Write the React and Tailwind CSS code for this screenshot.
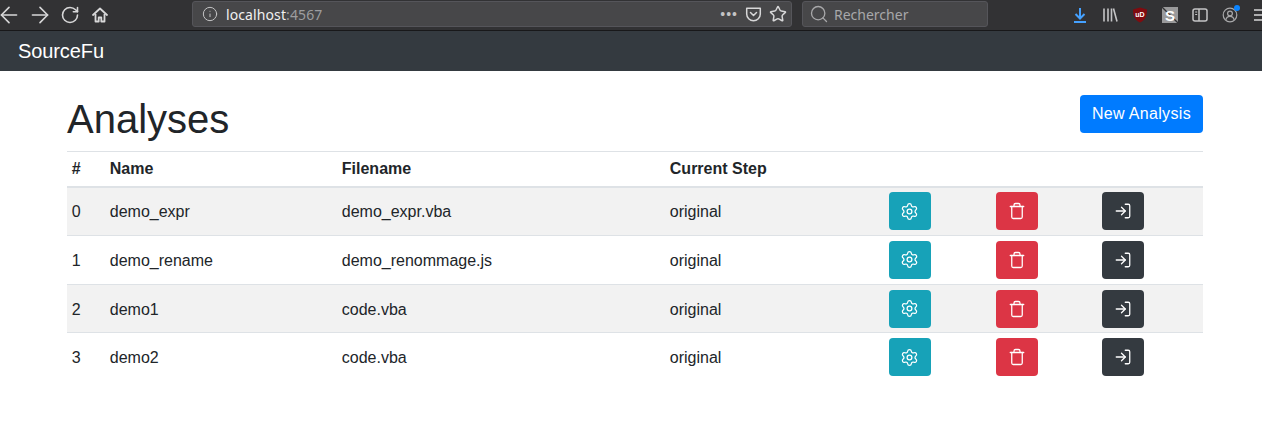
import { ArrowLeft, ArrowRight, RotateCw, Info, Star, Search, LogIn, Settings, Trash } from "lucide-react";

const rows = [
  { id: 0, name: "demo_expr", file: "demo_expr.vba", step: "original" },
  { id: 1, name: "demo_rename", file: "demo_renommage.js", step: "original" },
  { id: 2, name: "demo1", file: "code.vba", step: "original" },
  { id: 3, name: "demo2", file: "code.vba", step: "original" },
];

function HomeIcon() {
  return (
    <svg width="16" height="16" viewBox="0 0 16 16" fill="none" stroke="#d7d7d8" strokeWidth="1.8">
      <path d="M1 8 8 1.5 15 8" strokeLinecap="round" strokeLinejoin="round" />
      <path d="M3.5 7v7.5h3.2v-4h2.6v4h3.2V7" strokeLinejoin="round" />
    </svg>
  );
}

function PocketIcon() {
  return (
    <svg width="17" height="16" viewBox="0 0 16 16" fill="none" stroke="#d7d7d8" strokeWidth="1.5">
      <path d="M1.2 2.2h13.6v5.8a6.8 6.8 0 0 1-13.6 0z" strokeLinejoin="round" />
      <path d="M5 6.5 8 9.5l3-3" strokeLinecap="round" strokeLinejoin="round" />
    </svg>
  );
}

function DownloadIcon() {
  return (
    <svg width="16" height="16" viewBox="0 0 16 16" fill="none" stroke="#45a1ff" strokeWidth="2">
      <path d="M8 1v10M3.5 7 8 11.5 12.5 7M2 15h12" />
    </svg>
  );
}

function LibraryIcon() {
  return (
    <svg width="16" height="16" viewBox="0 0 16 16" fill="none" stroke="#c4c4c5" strokeWidth="1.6">
      <path d="M2 1.5v13M6 1.5v13M9.5 1.5v13M11.5 1.5 15 14.5" />
    </svg>
  );
}

function UblockIcon() {
  return (
    <svg width="16" height="16" viewBox="0 0 16 16">
      <path d="M8 .4 15 2.4c0 6.2-1.4 10.2-7 13.2C2.4 12.6 1 8.6 1 2.4z" fill="#800b0f" />
      <text x="8" y="9.8" textAnchor="middle" fontSize="7" fontWeight="700" fill="#fff" fontFamily="Liberation Sans">uD</text>
    </svg>
  );
}

function StylusIcon() {
  return (
    <svg width="16" height="16" viewBox="0 0 16 16">
      <rect width="16" height="16" fill="#9a9a9b" />
      <path d="M0 0 16 16" stroke="#323234" strokeWidth="1.3" />
      <text x="8" y="13.5" textAnchor="middle" fontSize="15" fontWeight="700" fill="#fff" fontFamily="Liberation Sans">S</text>
    </svg>
  );
}

function SidebarIcon() {
  return (
    <svg width="16" height="16" viewBox="0 0 16 16" fill="none" stroke="#c4c4c5" strokeWidth="1.5">
      <rect x="1" y="2" width="14" height="12" rx="2" />
      <path d="M7 2v12" />
      <path d="M3.2 5h2M3.2 7.5h2" strokeWidth="1" />
    </svg>
  );
}

function AccountIcon() {
  return (
    <span className="relative flex">
      <svg width="16" height="16" viewBox="0 0 16 16" fill="none" stroke="#a8a8aa" strokeWidth="1.2">
        <circle cx="8" cy="8" r="6.8" />
        <circle cx="8" cy="6.5" r="2.4" />
        <path d="M3.8 13c.6-2.6 2.2-3.6 4.2-3.6s3.6 1 4.2 3.6" />
      </svg>
      <span className="absolute -top-[2px] -right-[2px] h-[6px] w-[6px] rounded-full bg-[#0a84ff]" />
    </span>
  );
}

function MenuIcon() {
  return (
    <svg width="8" height="14" viewBox="0 0 8 14" fill="none" stroke="#d7d7d8" strokeWidth="1.5">
      <path d="M0 2h8M0 7h8M0 12h8" />
    </svg>
  );
}

function BrowserBar() {
  return (
    <div className="flex h-[31px] items-start border-b border-[#18181a] bg-[#323234] pt-[1px] font-['Noto_Sans',sans-serif] text-[14px]">
      <div className="flex h-[27px] w-[192px] shrink-0 items-center text-[#d7d7d8]">
        <ArrowLeft size={26} strokeWidth={1.5} className="-ml-[4px]" />
        <ArrowRight size={26} strokeWidth={1.5} className="ml-[5px]" />
        <RotateCw size={20} strokeWidth={1.9} className="ml-[7px]" />
        <span className="ml-[12px]"><HomeIcon /></span>
      </div>
      <div className="flex h-[26px] w-[600px] shrink-0 items-center rounded-[3px] border border-[#55555a] bg-[#474749] pl-[9px] pr-[4px]">
        <Info size={16} strokeWidth={1.5} className="text-[#c4c4c5]" />
        <span className="ml-[8px] mt-[2px] tracking-[0.1px] text-[#f0f0f0]">localhost<span className="text-[#9d9d9f]">:4567</span></span>
        <span className="ml-auto flex items-center gap-[7px]">
          <span className="text-[13px] font-bold leading-none tracking-[1px] text-[#c4c4c5]">•••</span>
          <PocketIcon />
          <Star size={18} strokeWidth={2} className="text-[#d7d7d8]" />
        </span>
      </div>
      <div className="ml-[10px] flex h-[26px] w-[186px] shrink-0 items-center rounded-[3px] border border-[#55555a] bg-[#474749] pl-[6px] text-[#a8a8aa]">
        <Search size={20} strokeWidth={1.6} />
        <span className="ml-[5px] mt-[2px]">Rechercher</span>
      </div>
      <div className="ml-auto flex h-[27px] items-center gap-[14px]">
        <DownloadIcon />
        <LibraryIcon />
        <UblockIcon />
        <StylusIcon />
        <SidebarIcon />
        <AccountIcon />
        <span className="ml-[2px] flex"><MenuIcon /></span>
      </div>
    </div>
  );
}

function IconButton({ color, children }) {
  return (
    <button className={`flex h-[38px] w-[42px] items-center justify-center rounded-[4px] text-white ${color}`}>
      {children}
    </button>
  );
}

export default function App() {
  return (
    <div className="min-h-[446px] bg-white font-['Liberation_Sans',sans-serif] text-[16px] leading-[24px] text-[#212529]">
      <BrowserBar />
      <nav className="flex h-[40px] items-center bg-[#343a40] px-[18px] text-[20px] tracking-[-0.1px] text-white">SourceFu</nav>
      <main className="px-[67px] pt-[24px] pr-[59px]">
        <div className="mb-[8px] flex items-start justify-between">
          <h1 className="text-[40px] leading-[48px] font-normal">Analyses</h1>
          <button className="h-[38px] rounded-[4px] bg-[#007bff] px-[12px] tracking-[0.33px] text-white">New Analysis</button>
        </div>
        <table className="w-full table-fixed border-collapse">
          <colgroup>
            <col className="w-[38px]" />
            <col className="w-[232px]" />
            <col className="w-[328px]" />
            <col className="w-[219px]" />
            <col className="w-[107px]" />
            <col className="w-[106px]" />
            <col />
          </colgroup>
          <thead>
            <tr className="border-t border-[#dee2e6] border-b-2 text-left">
              <th className="p-[4.8px] font-bold">#</th>
              <th className="p-[4.8px] font-bold">Name</th>
              <th className="p-[4.8px] font-bold">Filename</th>
              <th className="p-[4.8px] font-bold">Current Step</th>
              <th className="p-[4.8px]" />
              <th className="p-[4.8px]" />
              <th className="p-[4.8px]" />
            </tr>
          </thead>
          <tbody>
            {rows.map((row) => (
              <tr key={row.id} className="border-b border-[#dee2e6] last:border-b-0 odd:bg-[#f2f2f2]">
                <td className="px-[4.8px] pt-[6.8px] pb-[4.8px]">{row.id}</td>
                <td className="px-[4.8px] pt-[6.8px] pb-[4.8px]">{row.name}</td>
                <td className="px-[4.8px] pt-[6.8px] pb-[4.8px]">{row.file}</td>
                <td className="px-[4.8px] pt-[6.8px] pb-[4.8px]">{row.step}</td>
                <td className="p-[4.8px]">
                  <IconButton color="bg-[#17a2b8]"><Settings size={19} strokeWidth={1.6} /></IconButton>
                </td>
                <td className="p-[4.8px]">
                  <IconButton color="bg-[#dc3545]"><Trash size={18} strokeWidth={1.7} /></IconButton>
                </td>
                <td className="p-[4.8px]">
                  <IconButton color="bg-[#343a40]"><LogIn size={18} strokeWidth={1.7} /></IconButton>
                </td>
              </tr>
            ))}
          </tbody>
        </table>
      </main>
    </div>
  );
}
